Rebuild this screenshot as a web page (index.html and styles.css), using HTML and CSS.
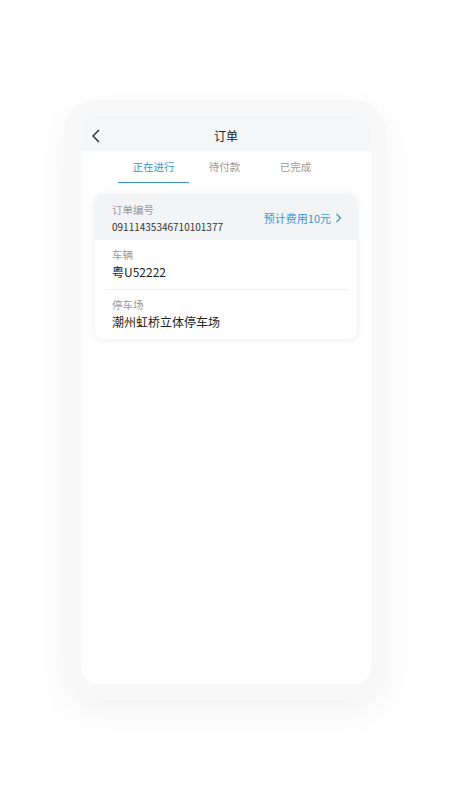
FILE: index.html
```html
<!DOCTYPE html>
<html lang="zh">
<head>
<meta charset="utf-8">
<link rel="stylesheet" href="styles.css">
</head>
<body>
<div class="frame">
  <div class="screen">
    <div class="header">
      <svg class="back" width="10" height="14" viewBox="0 0 10 14"><path d="M8 1 L2 7 L8 13" fill="none" stroke="#222" stroke-width="1.4"/></svg>
      <span class="title">订单</span>
    </div>
    <div class="tabs">
      <div class="tab active">正在进行</div>
      <div class="tab">待付款</div>
      <div class="tab">已完成</div>
    </div>
    <div class="card">
      <div class="card-top">
        <div class="field">
          <div class="label">订单编号</div>
          <div class="num">09111435346710101377</div>
        </div>
        <div class="fee">预计费用10元
          <svg width="7" height="10" viewBox="0 0 7 10"><path d="M1.5 1 L5.5 5 L1.5 9" fill="none" stroke="#3a95d6" stroke-width="1.2"/></svg>
        </div>
      </div>
      <div class="row">
        <div class="label">车辆</div>
        <div class="value">粤U52222</div>
      </div>
      <div class="divider"></div>
      <div class="row">
        <div class="label">停车场</div>
        <div class="value">潮州虹桥立体停车场</div>
      </div>
    </div>
  </div>
</div>
</body>
</html>
```
FILE: styles.css
```css
html, body { margin: 0; padding: 0; background: #fff; }
body {
  font-family: "Noto Sans CJK SC", "Noto Sans", sans-serif;
  width: 450px;
  height: 800px;
  padding-top: 100px;
  box-sizing: border-box;
}
.frame {
  width: 322px;
  height: 600px;
  margin: 0 auto;
  box-sizing: border-box;
  padding: 16px 15px 16px 17px;
  background: #f8f8f8;
  border-radius: 32px;
  box-shadow: 0 12px 36px rgba(0,0,0,0.05);
}
.screen {
  height: 100%;
  background: #fff;
  border-radius: 16px;
  overflow: hidden;
}
.header {
  height: 35px;
  box-sizing: border-box;
  padding-top: 3px;
  background: #f5f6f7;
  display: flex;
  align-items: center;
  justify-content: center;
  position: relative;
}
.back { position: absolute; left: 10px; top: 13px; }
.title { font-size: 12px; color: #222; }
.tabs {
  display: flex;
  justify-content: center;
  height: 32px;
  padding-right: 3px;
}
.tab {
  width: 71px;
  text-align: center;
  font-size: 10.5px;
  color: #999;
  line-height: 32px;
  box-sizing: border-box;
}
.tab.active {
  color: #3a95d6;
  border-bottom: 1.5px solid #3a95d6;
}
.card {
  margin: 11px 14px 0 14px;
  border-radius: 8px;
  background: #fff;
  box-shadow: 0 1px 8px rgba(0,0,0,0.08);
  overflow: hidden;
}
.card-top {
  background: #f3f4f6;
  height: 46px;
  box-sizing: border-box;
  padding: 2px 15px 0 17px;
  display: flex;
  align-items: center;
  justify-content: space-between;
}
.label { font-size: 10.5px; color: #9a9a9a; line-height: 16px; }
.num { font-size: 10px; color: #333; line-height: 17px; }
.fee {
  font-size: 11px;
  color: #3a95d6;
  display: flex;
  align-items: center;
  gap: 4px;
}
.row { padding: 7px 17px 8px; }
.value { font-size: 12px; color: #222; line-height: 18px; }
.divider { height: 1px; background: #f0f0f0; margin: 0 8px 0 10px; }
```
